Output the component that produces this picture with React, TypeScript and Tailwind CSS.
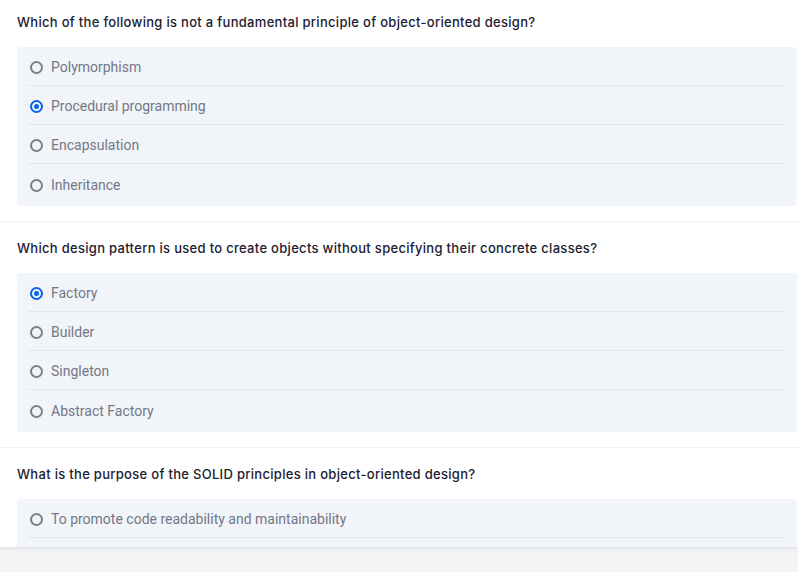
const questions = [
  {
    q: "Which of the following is not a fundamental principle of object-oriented design?",
    options: ["Polymorphism", "Procedural programming", "Encapsulation", "Inheritance"],
    selected: 1,
  },
  {
    q: "Which design pattern is used to create objects without specifying their concrete classes?",
    options: ["Factory", "Builder", "Singleton", "Abstract Factory"],
    selected: 0,
  },
  {
    q: "What is the purpose of the SOLID principles in object-oriented design?",
    options: ["To promote code readability and maintainability"],
    selected: -1,
  },
];

function Radio({ checked }: { checked: boolean }) {
  return checked ? (
    <span className="w-[13px] h-[13px] rounded-full border-2 border-[#0b63e5] flex items-center justify-center shrink-0">
      <span className="w-[5px] h-[5px] rounded-full bg-[#0b63e5]" />
    </span>
  ) : (
    <span className="w-[13px] h-[13px] rounded-full border-2 border-[#7c7f8a] shrink-0" />
  );
}

export default function App() {
  return (
    <div className="min-h-screen bg-[#f4f5f7]">
      <div className="h-[547px] overflow-hidden bg-white shadow-[0_2px_4px_rgba(0,0,0,0.08)]">
        {questions.map((item, i) => (
          <section
            key={i}
            className={`${i === 0 ? "pt-3" : "pt-4"} pb-[15px] pl-[17px] pr-px border-b border-[#eef0f3]`}
          >
            <h3 className="text-[13px] leading-5 tracking-[0.3px] text-[#1b2030] font-[Inter,sans-serif] font-medium mb-[15px]">
              {item.q}
            </h3>
            {/* options list */}
            <div className="bg-[#f1f4f8] rounded-[4px] px-[11px] pb-[3px] divide-y divide-[#e3e7ec]">
              {item.options.map((opt, j) => (
                <label
                  key={opt}
                  className={`h-[39px] ${
                    i === 2 ? "border-b border-[#e3e7ec]" : ""
                  } flex items-center gap-[8px] pl-[2px] pt-[3px] font-[Roboto,sans-serif] text-[14px] text-[#737886]`}
                >
                  <Radio checked={j === item.selected} />
                  <span>{opt}</span>
                </label>
              ))}
              {i === 2 && <div className="h-[40px]" />}
            </div>
          </section>
        ))}
      </div>
    </div>
  );
}
